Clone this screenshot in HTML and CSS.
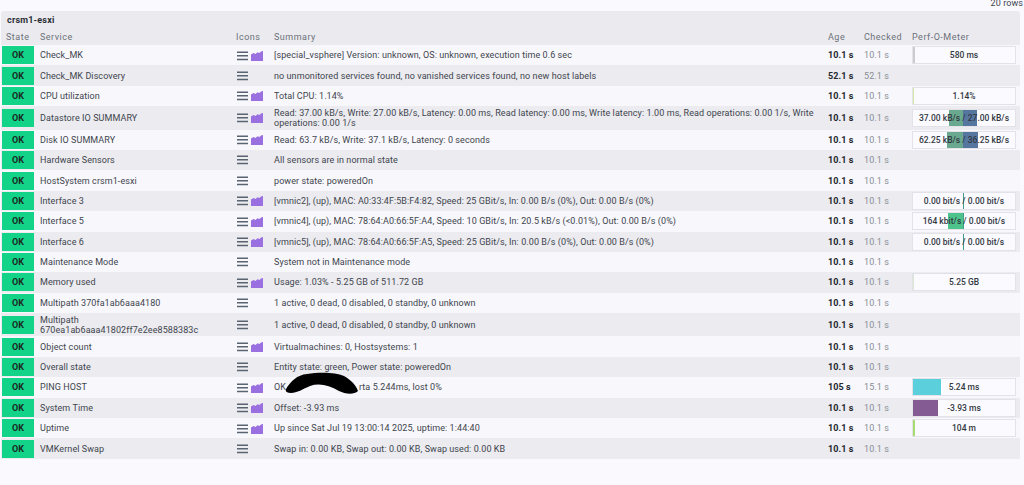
FILE: index.html
```html
<!DOCTYPE html>
<html lang="en">
<head>
    <meta charset="UTF-8">
    <title>crsm1-esxi - Services</title>
    <link rel="stylesheet" href="styles.css">
</head>
<body>
    <svg class="defs" width="0" height="0">
        <symbol id="menu" viewBox="0 0 12 10"><path d="M0 0h12v1.6H0zM0 4h12v1.6H0zM0 8h12v1.6H0z"/></symbol>
        <symbol id="graph" viewBox="0 0 12 10"><path d="M0 3.5 2.5 2 4.5 3 6.5 1.2 8.5 2 10 .4 12 0V10H0z"/></symbol>
    </svg>
    <div class="row-count">20 rows</div>
    <div class="host">crsm1-esxi</div>
    <table class="services">
        <thead>
            <tr>
                <th class="state">State</th><th class="service">Service</th><th class="icons">Icons</th><th>Summary</th><th class="age">Age</th><th class="checked">Checked</th><th class="perf">Perf-O-Meter</th>
            </tr>
        </thead>
        <tbody>
            <tr>
                <td class="state"><span class="ok">OK</span></td><td class="service">Check_MK</td>
                <td class="icons"><svg class="ic-menu"><use href="#menu"/></svg><svg class="ic-graph"><use href="#graph"/></svg></td>
                <td>[special_vsphere] Version: unknown, OS: unknown, execution time 0.6 sec</td>
                <td class="age">10.1 s</td><td class="checked">10.1 s</td>
                <td class="perf"><div class="meter"><div class="bars"><i style="width:2px;background:#ccc"></i></div><b>580 ms</b></div></td>
            </tr>
            <tr>
                <td class="state"><span class="ok">OK</span></td><td class="service">Check_MK Discovery</td>
                <td class="icons"><svg class="ic-menu"><use href="#menu"/></svg></td>
                <td>no unmonitored services found, no vanished services found, no new host labels</td>
                <td class="age">52.1 s</td><td class="checked">52.1 s</td><td class="perf"></td>
            </tr>
            <tr>
                <td class="state"><span class="ok">OK</span></td><td class="service">CPU utilization</td>
                <td class="icons"><svg class="ic-menu"><use href="#menu"/></svg><svg class="ic-graph"><use href="#graph"/></svg></td>
                <td>Total CPU: 1.14%</td>
                <td class="age">10.1 s</td><td class="checked">10.1 s</td>
                <td class="perf"><div class="meter"><div class="bars"><i style="width:1px;background:#d5e6a8"></i></div><b>1.14%</b></div></td>
            </tr>
            <tr class="tall">
                <td class="state"><span class="ok">OK</span></td><td class="service">Datastore IO SUMMARY</td>
                <td class="icons"><svg class="ic-menu"><use href="#menu"/></svg><svg class="ic-graph"><use href="#graph"/></svg></td>
                <td>Read: 37.00 kB/s, Write: 27.00 kB/s, Latency: 0.00 ms, Read latency: 0.00 ms, Write latency: 1.00 ms, Read operations: 0.00 1/s, Write operations: 0.00 1/s</td>
                <td class="age">10.1 s</td><td class="checked">10.1 s</td>
                <td class="perf"><div class="meter"><div class="bars"><i style="width:36px"></i><i style="width:14px;background:#6aa98f"></i><i style="width:14px;background:#55769f"></i></div><b>37.00 kB/s / 27.00 kB/s</b></div></td>
            </tr>
            <tr>
                <td class="state"><span class="ok">OK</span></td><td class="service">Disk IO SUMMARY</td>
                <td class="icons"><svg class="ic-menu"><use href="#menu"/></svg><svg class="ic-graph"><use href="#graph"/></svg></td>
                <td>Read: 63.7 kB/s, Write: 37.1 kB/s, Latency: 0 seconds</td>
                <td class="age">10.1 s</td><td class="checked">10.1 s</td>
                <td class="perf"><div class="meter"><div class="bars"><i style="width:34px"></i><i style="width:16px;background:#6aa98f"></i><i style="width:15px;background:#55769f"></i></div><b>62.25 kB/s / 36.25 kB/s</b></div></td>
            </tr>
            <tr>
                <td class="state"><span class="ok">OK</span></td><td class="service">Hardware Sensors</td>
                <td class="icons"><svg class="ic-menu"><use href="#menu"/></svg></td>
                <td>All sensors are in normal state</td>
                <td class="age">10.1 s</td><td class="checked">10.1 s</td><td class="perf"></td>
            </tr>
            <tr>
                <td class="state"><span class="ok">OK</span></td><td class="service">HostSystem crsm1-esxi</td>
                <td class="icons"><svg class="ic-menu"><use href="#menu"/></svg></td>
                <td>power state: poweredOn</td>
                <td class="age">10.1 s</td><td class="checked">10.1 s</td><td class="perf"></td>
            </tr>
            <tr>
                <td class="state"><span class="ok">OK</span></td><td class="service">Interface 3</td>
                <td class="icons"><svg class="ic-menu"><use href="#menu"/></svg><svg class="ic-graph"><use href="#graph"/></svg></td>
                <td>[vmnic2], (up), MAC: A0:33:4F:5B:F4:82, Speed: 25 GBit/s, In: 0.00 B/s (0%), Out: 0.00 B/s (0%)</td>
                <td class="age">10.1 s</td><td class="checked">10.1 s</td>
                <td class="perf"><div class="meter"><div class="bars"><i style="width:50px"></i><i style="width:1px;background:#3f9c8c"></i></div><b>0.00 bit/s / 0.00 bit/s</b></div></td>
            </tr>
            <tr>
                <td class="state"><span class="ok">OK</span></td><td class="service">Interface 5</td>
                <td class="icons"><svg class="ic-menu"><use href="#menu"/></svg><svg class="ic-graph"><use href="#graph"/></svg></td>
                <td>[vmnic4], (up), MAC: 78:64:A0:66:5F:A4, Speed: 10 GBit/s, In: 20.5 kB/s (&lt;0.01%), Out: 0.00 B/s (0%)</td>
                <td class="age">10.1 s</td><td class="checked">10.1 s</td>
                <td class="perf"><div class="meter"><div class="bars"><i style="width:35px"></i><i style="width:15px;background:#4ec48c"></i><i style="width:1px;background:#3f9c8c"></i></div><b>164 kbit/s / 0.00 bit/s</b></div></td>
            </tr>
            <tr>
                <td class="state"><span class="ok">OK</span></td><td class="service">Interface 6</td>
                <td class="icons"><svg class="ic-menu"><use href="#menu"/></svg><svg class="ic-graph"><use href="#graph"/></svg></td>
                <td>[vmnic5], (up), MAC: 78:64:A0:66:5F:A5, Speed: 25 GBit/s, In: 0.00 B/s (0%), Out: 0.00 B/s (0%)</td>
                <td class="age">10.1 s</td><td class="checked">10.1 s</td>
                <td class="perf"><div class="meter"><div class="bars"><i style="width:50px"></i><i style="width:1px;background:#3f9c8c"></i></div><b>0.00 bit/s / 0.00 bit/s</b></div></td>
            </tr>
            <tr>
                <td class="state"><span class="ok">OK</span></td><td class="service">Maintenance Mode</td>
                <td class="icons"><svg class="ic-menu"><use href="#menu"/></svg></td>
                <td>System not in Maintenance mode</td>
                <td class="age">10.1 s</td><td class="checked">10.1 s</td><td class="perf"></td>
            </tr>
            <tr>
                <td class="state"><span class="ok">OK</span></td><td class="service">Memory used</td>
                <td class="icons"><svg class="ic-menu"><use href="#menu"/></svg><svg class="ic-graph"><use href="#graph"/></svg></td>
                <td>Usage: 1.03% - 5.25 GB of 511.72 GB</td>
                <td class="age">10.1 s</td><td class="checked">10.1 s</td>
                <td class="perf"><div class="meter"><div class="bars"><i style="width:1px;background:#dbe6d0"></i></div><b>5.25 GB</b></div></td>
            </tr>
            <tr>
                <td class="state"><span class="ok">OK</span></td><td class="service">Multipath 370fa1ab6aaa4180</td>
                <td class="icons"><svg class="ic-menu"><use href="#menu"/></svg></td>
                <td>1 active, 0 dead, 0 disabled, 0 standby, 0 unknown</td>
                <td class="age">10.1 s</td><td class="checked">10.1 s</td><td class="perf"></td>
            </tr>
            <tr class="tall">
                <td class="state"><span class="ok">OK</span></td><td class="service">Multipath 670ea1ab6aaa41802ff7e2ee8588383c</td>
                <td class="icons"><svg class="ic-menu"><use href="#menu"/></svg></td>
                <td>1 active, 0 dead, 0 disabled, 0 standby, 0 unknown</td>
                <td class="age">10.1 s</td><td class="checked">10.1 s</td><td class="perf"></td>
            </tr>
            <tr>
                <td class="state"><span class="ok">OK</span></td><td class="service">Object count</td>
                <td class="icons"><svg class="ic-menu"><use href="#menu"/></svg><svg class="ic-graph"><use href="#graph"/></svg></td>
                <td>Virtualmachines: 0, Hostsystems: 1</td>
                <td class="age">10.1 s</td><td class="checked">10.1 s</td><td class="perf"></td>
            </tr>
            <tr>
                <td class="state"><span class="ok">OK</span></td><td class="service">Overall state</td>
                <td class="icons"><svg class="ic-menu"><use href="#menu"/></svg></td>
                <td>Entity state: green, Power state: poweredOn</td>
                <td class="age">10.1 s</td><td class="checked">10.1 s</td><td class="perf"></td>
            </tr>
            <tr>
                <td class="state"><span class="ok">OK</span></td><td class="service">PING HOST</td>
                <td class="icons"><svg class="ic-menu"><use href="#menu"/></svg><svg class="ic-graph"><use href="#graph"/></svg></td>
                <td class="redacted">OK<span class="gap"></span>rta 5.244ms, lost 0%<svg class="blot" viewBox="0 0 76 22"><path d="M3 17C8 9 14 3 24 2 36 0 52 0 61 4 68 8 73 13 75 19 71 23 62 22 56 19 46 13 36 11 27 14 20 17 14 21 8 21 4 21 2 20 3 17Z"/></svg></td>
                <td class="age">105 s</td><td class="checked">15.1 s</td>
                <td class="perf"><div class="meter"><div class="bars"><i style="width:28px;background:#5bd0dc"></i></div><b>5.24 ms</b></div></td>
            </tr>
            <tr>
                <td class="state"><span class="ok">OK</span></td><td class="service">System Time</td>
                <td class="icons"><svg class="ic-menu"><use href="#menu"/></svg><svg class="ic-graph"><use href="#graph"/></svg></td>
                <td>Offset: -3.93 ms</td>
                <td class="age">10.1 s</td><td class="checked">10.1 s</td>
                <td class="perf"><div class="meter"><div class="bars"><i style="width:25px;background:#855b94"></i></div><b>-3.93 ms</b></div></td>
            </tr>
            <tr>
                <td class="state"><span class="ok">OK</span></td><td class="service">Uptime</td>
                <td class="icons"><svg class="ic-menu"><use href="#menu"/></svg><svg class="ic-graph"><use href="#graph"/></svg></td>
                <td>Up since Sat Jul 19 13:00:14 2025, uptime: 1:44:40</td>
                <td class="age">10.1 s</td><td class="checked">10.1 s</td>
                <td class="perf"><div class="meter"><div class="bars"><i style="width:2px;background:#a9dc70"></i></div><b>104 m</b></div></td>
            </tr>
            <tr>
                <td class="state"><span class="ok">OK</span></td><td class="service">VMKernel Swap</td>
                <td class="icons"><svg class="ic-menu"><use href="#menu"/></svg></td>
                <td>Swap in: 0.00 KB, Swap out: 0.00 KB, Swap used: 0.00 KB</td>
                <td class="age">10.1 s</td><td class="checked">10.1 s</td><td class="perf"></td>
            </tr>
        </tbody>
    </table>
</body>
</html>
```

FILE: styles.css
```css
body {
    margin: 0;
    height: 485px;
    overflow: hidden;
    background-color: #f9f9fe;
    color: #3f454d;
    font-family: Roboto, "Liberation Sans", sans-serif;
    font-size: 9px;
    letter-spacing: 0.08px;
}

.defs {
    display: block;
    height: 0;
}

.row-count {
    height: 11px;
    line-height: 6px;
    margin-right: 1px;
    text-align: right;
    white-space: nowrap;
}

.host {
    height: 18px;
    line-height: 18px;
    margin-left: 1px;
    width: 1019px;
    padding-left: 6px;
    box-sizing: border-box;
    background-color: #ebebef;
    border-radius: 3px 3px 0 0;
    font-weight: 700;
    letter-spacing: 0.2px;
    color: #2b2f36;
}

.services {
    width: 1019px;
    margin-left: 1px;
    table-layout: fixed;
    border-collapse: collapse;
}

th, td {
    box-sizing: border-box;
    padding: 0 4px 0 5px;
}

th {
    height: 16px;
    background-color: #ebebef;
    color: #6c7079;
    font-weight: 400;
    text-align: left;
    letter-spacing: 0.5px;
}

td {
    height: 20.4px;
    line-height: 10px;
}

tbody tr:nth-child(odd) {
    background-color: #f7f7fc;
}

tbody tr:nth-child(even) {
    background-color: #ebebf0;
}

tr.tall td {
    height: 23.4px;
}

.state {
    width: 34px;
}

td.state {
    padding: 0 0 0 1px;
    text-align: center;
}

.ok {
    display: block;
    width: 32px;
    height: 18px;
    line-height: 18px;
    background-color: #13d389;
    color: #1b2a22;
    font-weight: 700;
}

.service {
    width: 196px;
}

.icons {
    width: 38px;
    white-space: nowrap;
}

td.icons {
    padding-left: 6px;
    padding-right: 0;
}

.age {
    width: 36px;
}

td.age {
    color: #23272d;
    font-weight: 700;
}

.checked {
    width: 48px;
}

td.checked {
    color: #8a8e96;
}

.perf {
    width: 113px;
}

.ic-menu {
    width: 11px;
    height: 10px;
    margin-right: 3px;
    fill: #5a6370;
    vertical-align: middle;
}

.ic-graph {
    width: 12px;
    height: 10px;
    fill: #9a6fdf;
    vertical-align: middle;
}

.meter {
    display: grid;
    height: 18px;
    box-sizing: border-box;
    border: 1px solid #e2e2e8;
    background-color: #fbfbff;
}

.bars, .meter b {
    grid-area: 1 / 1;
}

.bars {
    display: flex;
}

.bars i {
    display: block;
}

.meter b {
    line-height: 16px;
    text-align: center;
    font-size: 8.5px;
    letter-spacing: 0;
    color: #33383f;
    font-weight: 500;
    white-space: nowrap;
}

.redacted {
    position: relative;
}

.gap {
    display: inline-block;
    width: 73px;
}

.blot {
    position: absolute;
    left: 14px;
    top: -5px;
    width: 76px;
    height: 22px;
    fill: #000;
}
```
